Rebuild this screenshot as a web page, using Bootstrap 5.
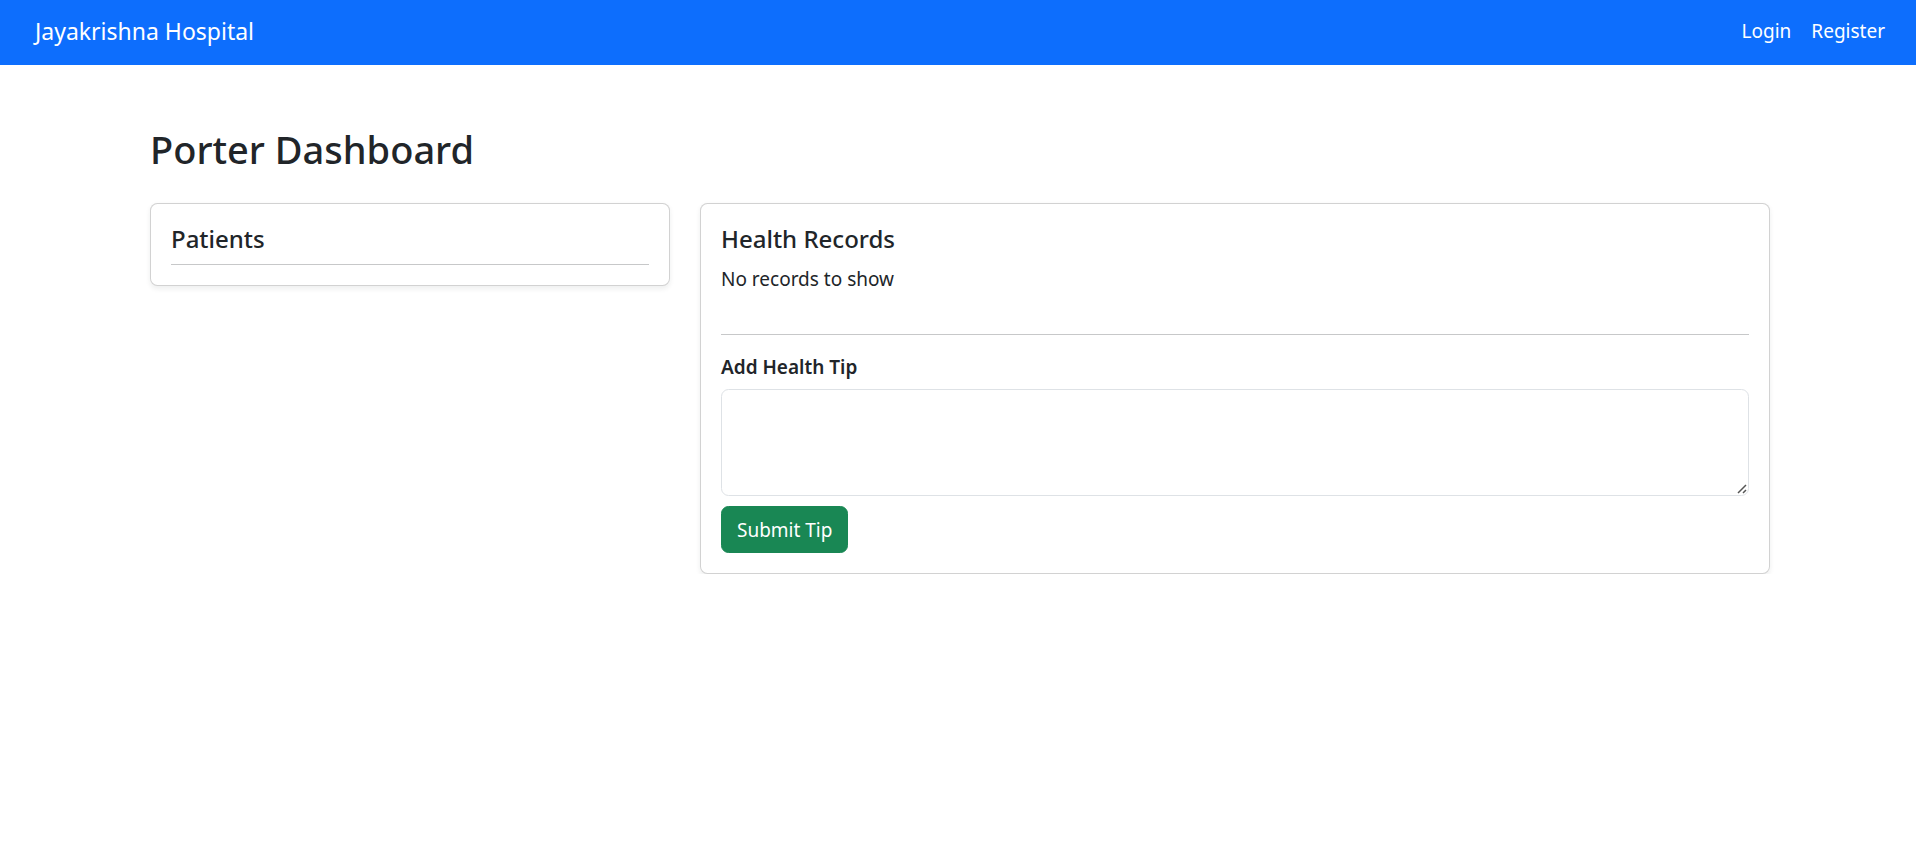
<!DOCTYPE html>
<html lang="en">
<head>
<meta charset="utf-8">
<meta name="viewport" content="width=device-width, initial-scale=1">
<title>Porter Dashboard - Jayakrishna Hospital</title>
<link href="https://cdn.jsdelivr.net/npm/bootstrap@5.3.0/dist/css/bootstrap.min.css" rel="stylesheet">
<style>
  html { font-size: 20px; }
  body { font-family: "Noto Sans", sans-serif; font-size: 19px; line-height: 30px; }
  .site-bar { padding: 8px 31px 12px 35px; min-height: 65px; }
  .site-bar .navbar-brand { font-size: 23px; line-height: 36px; padding: 0; margin: 0; }
  .site-bar a { color: #fff; }
  .dashboard { max-width: 1654px; padding-left: 19px; padding-right: 15px; }
  .dashboard h1 { font-size: 38px; line-height: 48px; font-weight: 500; }
  .card-title { font-size: 24px; line-height: 30px; margin-bottom: 10px; font-weight: 500; }
  .tip-label { font-size: 19px; line-height: 24px; font-weight: 600; margin-bottom: 10px; display: block; }
  .dashboard .card-body { padding: 20px; }
  .dashboard hr { margin: 20px 0; border-top: 1px solid; }
  .dashboard .btn { font-size: 19px; line-height: 30px; padding: 8px 15px 7px; }
  textarea::-webkit-resizer {
    background: url("data:image/svg+xml,%3Csvg xmlns='http://www.w3.org/2000/svg' width='15' height='15'%3E%3Cpath d='M5 13L13 5M10 13L13 10' stroke='%23555' stroke-width='1.5' fill='none'/%3E%3C/svg%3E") no-repeat right bottom;
  }
</style>
</head>
<body>
<nav class="navbar site-bar bg-primary">
  <a class="navbar-brand" href="#">Jayakrishna Hospital</a>
  <div class="d-flex gap-3">
    <a class="text-decoration-none" href="#login">Login</a>
    <a class="text-decoration-none" href="#register">Register</a>
  </div>
</nav>
<main class="container dashboard mt-5">
  <h1 class="mb-4">Porter Dashboard</h1>
  <div class="row">
    <div class="col-md-4">
      <section class="card shadow-sm">
        <div class="card-body">
          <h2 class="card-title">Patients</h2>
          <hr class="my-0">
        </div>
      </section>
    </div>
    <div class="col-md-8">
      <section class="card shadow-sm">
        <div class="card-body">
          <h2 class="card-title">Health Records</h2>
          <p class="mb-0 pb-3">No records to show</p>
          <hr>
          <form>
            <label class="tip-label" for="tip">Add Health Tip</label>
            <textarea class="form-control mb-2" id="tip" rows="3"></textarea>
            <button type="button" class="btn btn-success">Submit Tip</button>
          </form>
        </div>
      </section>
    </div>
  </div>
</main>
<script src="https://cdn.jsdelivr.net/npm/bootstrap@5.3.0/dist/js/bootstrap.bundle.min.js"></script>
</body>
</html>
